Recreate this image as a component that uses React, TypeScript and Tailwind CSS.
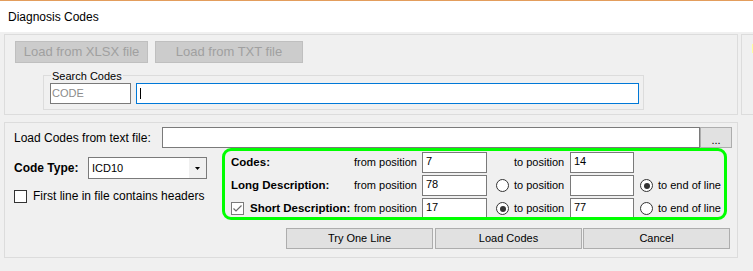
const font = "font-['Liberation_Sans',Arial,sans-serif]";

function Radio({ checked = false, hidden = false }: { checked?: boolean; hidden?: boolean }) {
  return (
    <span
      className={`w-[13px] h-[13px] rounded-full border border-[#333333] bg-white flex items-center justify-center shrink-0 ${
        hidden ? "invisible" : ""
      }`}
    >
      {checked && <span className="w-[6px] h-[6px] rounded-full bg-[#333333]" />}
    </span>
  );
}

function Check({ checked = false }: { checked?: boolean }) {
  return (
    <span
      className={`w-[13px] h-[13px] border bg-white flex items-center justify-center shrink-0 ${
        checked ? "border-[#7a7a7a]" : "border-[#333333]"
      }`}
    >
      {checked && (
        <svg width="11" height="11" viewBox="0 0 11 11">
          <polyline points="1.5,5.5 4,8 9.5,2.5" fill="none" stroke="#6b6b6b" strokeWidth="1.2" />
        </svg>
      )}
    </span>
  );
}

function Field({ value = "", w }: { value?: string; w: string }) {
  return (
    <div className={`${w} h-[21px] border border-[#7a7a7a] bg-white pl-[3px] text-[11px] leading-[17px] text-black shrink-0`}>
      {value}
    </div>
  );
}

const rows = [
  { label: "Codes:", check: false, from: "7", to: "14", mode: "none" },
  { label: "Long Description:", check: false, from: "78", to: "", mode: "end" },
  { label: "Short Description:", check: true, from: "17", to: "77", mode: "to" },
];

export default function App() {
  return (
    <div className={`w-[753px] h-[271px] bg-[#f0f0f0] overflow-hidden text-black ${font}`}>
      {/* Title bar */}
      <div className="h-[32px] bg-white border-t border-[#e39d5c] flex items-center pl-[8px] text-[12px]">
        Diagnosis Codes
      </div>

      <div className="flex flex-col pl-[4px] pt-[2px]">
        <div className="flex gap-[3px]">
          {/* Top group */}
          <div className="w-[734px] h-[81px] border border-[#dcdcdc] pt-[6px] pl-[10px] shrink-0">
            <div className="flex gap-[7px]">
              <div className="w-[133px] h-[22px] bg-[#cccccc] border border-[#bfbfbf] text-[13px] text-[#a0a0a0] flex items-center justify-center">
                Load from XLSX file
              </div>
              <div className="w-[148px] h-[22px] bg-[#cccccc] border border-[#bfbfbf] text-[13px] text-[#a0a0a0] flex items-center justify-center">
                Load from TXT file
              </div>
            </div>
            <div className="relative ml-[28px] mt-[12px] w-[601px] h-[35px] border border-[#dcdcdc] pl-[6px] pt-[7px] flex gap-[5px]">
              <span className="absolute left-[7px] -top-[6px] px-[1px] bg-[#f0f0f0] text-[11px] leading-[13px]">
                Search Codes
              </span>
              <div className="w-[81px] h-[21px] border border-[#7a7a7a] bg-white pl-[1px] text-[11px] leading-[19px] text-[#8c8c8c]">
                CODE
              </div>
              <div className="w-[503px] h-[21px] border border-[#0078d7] bg-white pl-[3px] pt-[4px]">
                <div className="w-[1px] h-[11px] bg-black" />
              </div>
            </div>
          </div>
          {/* Partial neighbour group */}
          <div className="flex-1 h-[81px] border border-[#dcdcdc] pt-[9px] pl-[10px]">
            <div className="w-[2px] h-[9px] bg-[#ffffa0]" />
          </div>
        </div>

        {/* Bottom group */}
        <div className="mt-[7px] w-[734px] h-[136px] border border-[#dcdcdc] pt-[4px] pl-[9px]">
          <div className="flex items-center h-[21px]">
            <span className="w-[148px] text-[12px]">Load Codes from text file:</span>
            <div className="w-[538px] h-[21px] border border-[#7a7a7a] bg-white" />
            <div className="w-[32px] h-[21px] bg-[#e1e1e1] border border-[#adadad] text-[11px] flex items-end justify-center pb-[1px] leading-[12px]">
              ...
            </div>
          </div>

          <div className="flex">
            <div className="w-[208px] flex flex-col shrink-0">
              <div className="flex items-center mt-[9px]">
                <span className="w-[74px] text-[12px] font-bold">Code Type:</span>
                <div className="w-[119px] h-[22px] border border-[#7a7a7a] bg-white flex items-center">
                  <span className="flex-1 pl-[3px] text-[11px]">ICD10</span>
                  <span className="w-[17px] h-full bg-[#f0f0f0] flex items-center justify-center">
                    <svg width="5" height="3" viewBox="0 0 5 3">
                      <polygon points="0,0 5,0 2.5,3" fill="#000" />
                    </svg>
                  </span>
                </div>
              </div>
              <div className="flex items-center gap-[6px] mt-[8px]">
                <Check />
                <span className="text-[12px]">First line in file contains headers</span>
              </div>
            </div>

            <div className="relative w-[505px] h-[72px] pt-[4px] pl-[9px] flex flex-col gap-[2px]">
              {rows.map((r) => (
                <div key={r.label} className="flex items-center h-[21px] text-[11px]">
                  <div className="w-[123px] flex items-center gap-[6px] shrink-0">
                    {r.check && <Check checked />}
                    <span className="font-bold text-[11.5px]">{r.label}</span>
                  </div>
                  <span className="w-[68px] shrink-0">from position</span>
                  <Field value={r.from} w="w-[65px]" />
                  <div className="ml-[9px] w-[74px] flex items-center gap-[5px] shrink-0">
                    <Radio hidden={r.mode === "none"} checked={r.mode === "to"} />
                    <span>to position</span>
                  </div>
                  <Field value={r.to} w="w-[64px]" />
                  {r.mode !== "none" && (
                    <div className="ml-[6px] flex items-center gap-[5px]">
                      <Radio checked={r.mode === "end"} />
                      <span>to end of line</span>
                    </div>
                  )}
                </div>
              ))}
              <div className="absolute inset-0 border-[3px] border-[#00ff00] rounded-[9px] pointer-events-none" />
            </div>
          </div>

          <div className="flex mt-[8px] ml-[272px] text-[11px]">
            <div className="w-[147px] h-[21px] bg-[#e1e1e1] border border-[#adadad] flex items-center justify-center">
              Try One Line
            </div>
            <div className="ml-[2px] w-[147px] h-[21px] bg-[#e1e1e1] border border-[#adadad] flex items-center justify-center">
              Load Codes
            </div>
            <div className="ml-[1px] w-[147px] h-[21px] bg-[#e1e1e1] border border-[#adadad] flex items-center justify-center">
              Cancel
            </div>
          </div>
        </div>
      </div>
    </div>
  );
}
